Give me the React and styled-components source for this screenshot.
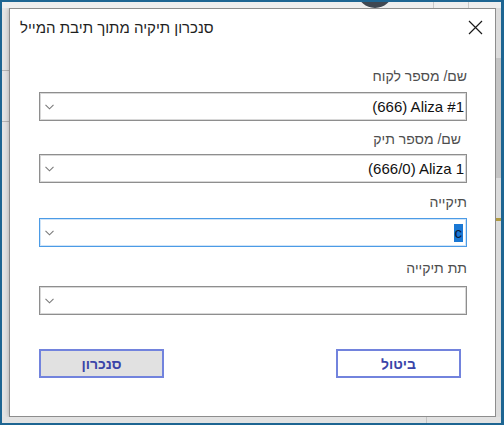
import React from 'react'
import styled, {createGlobalStyle} from 'styled-components'

const Global = createGlobalStyle`
  html, body { margin: 0; padding: 0; background: #ffffff; }
  body { font-family: "Liberation Sans", "DejaVu Sans", sans-serif; }
  * { box-sizing: border-box; }
`

const Frame = styled.div`
  width: 504px;
  height: 425px;
  border: 2px solid #1d6592;
  border-right-width: 3px;
  background: #e9e9e9;
  display: flex;
  flex-direction: column;
  overflow: hidden;
`

const TopStrip = styled.div`
  height: 6px;
  display: flex;
  background: #eeeeee;
  position: relative;
  .avatar {
    position: absolute;
    left: 356px;
    top: -24px;
    width: 34px;
    height: 30px;
    border-radius: 50%;
    background: #3f4852;
  }
  .sep {
    position: absolute;
    top: 0;
    bottom: 0;
    width: 1px;
    background: #c8c8c8;
  }
`

const Middle = styled.div`
  flex: 1;
  display: flex;
  min-height: 0;
`

const LeftStrip = styled.div`
  width: 7px;
  background: #e4e4e4;
  display: flex;
  flex-direction: column;
  .line { height: 1px; background: #b5b5b5; }
`

const RightStrip = styled.div`
  width: 5px;
  background: #dcdcdc;
  display: flex;
  flex-direction: column;
  .thumb { margin-top: 50px; height: 120px; background: #c4c4c4; }
  .mark { margin-top: 40px; height: 3px; background: #b09a40; }
`

const BottomStrip = styled.div`
  height: 6px;
  background: #e2e2e2;
  display: flex;
  .sep { margin-left: 424px; width: 1px; background: #c4c4c4; }
`

const Dialog = styled.div`
  width: 487px;
  background: #ffffff;
  border: 1px solid #8d8d8d;
  box-shadow: 0 0 5px rgba(0, 0, 0, 0.28);
  display: flex;
  flex-direction: column;
`

const TitleBar = styled.div`
  height: 36px;
  display: flex;
  align-items: center;
  justify-content: space-between;
  padding: 0 12px 0 10px;
`

const Title = styled.div`
  font-size: 15px;
  color: #1e1e1e;
  direction: rtl;
`

const Close = styled.button`
  width: 16px;
  height: 16px;
  border: none;
  background: none;
  padding: 0;
  display: flex;
  align-items: center;
  justify-content: center;
`

const Form = styled.div`
  direction: rtl;
  display: flex;
  flex-direction: column;
  padding: 22px 28px 0 29px;
`

const Label = styled.div`
  height: 18px;
  line-height: 18px;
  font-size: 14px;
  color: #4e4e4e;
  margin-top: ${p => p.$top || 0}px;
  margin-bottom: ${p => p.$bottom || 7}px;
  padding-right: ${p => p.$indent || 0}px;
`

const Select = styled.div`
  height: 29px;
  border: 1px solid ${p => (p.$focused ? '#4b9be6' : '#8e8e8e')};
  box-shadow: ${p => (p.$focused ? 'inset 0 0 0 1px #cfe4f8' : 'inset 0 0 0 1px #d8d8d8')};
  display: flex;
  align-items: center;
  justify-content: space-between;
  padding: 0 2px 0 5px;
  font-size: 15px;
  color: #111111;
`

const Value = styled.span`
  direction: ltr;
  unicode-bidi: isolate;
`

const Highlight = styled.span`
  display: inline-block;
  background: #1a78d4;
  color: #0c1a38;
  height: 18px;
  line-height: 18px;
  padding: 0 1px;
  margin-right: 1px;
`

const Buttons = styled.div`
  direction: rtl;
  display: flex;
  justify-content: space-between;
  padding: 0 6px 0 0;
  margin-top: 34px;
`

const Button = styled.button`
  width: 125px;
  height: 29px;
  border: 2px solid #7283dd;
  background: ${p => (p.$gray ? '#e1e1e1' : '#ffffff')};
  color: #3a44a8;
  font-family: "Liberation Sans", "DejaVu Sans", sans-serif;
  font-weight: bold;
  font-size: 14px;
  padding: 0;
`

const Chevron = () => (
  <svg width="9" height="6" viewBox="0 0 9 6">
    <polyline points="0.5,0.8 4.5,4.8 8.5,0.8" fill="none" stroke="#7a7a7a" strokeWidth="1.1" />
  </svg>
)

const CloseIcon = () => (
  <svg width="15" height="15" viewBox="0 0 15 15">
    <path d="M1 1 L14 14 M14 1 L1 14" stroke="#1a1a1a" strokeWidth="1.2" fill="none" />
  </svg>
)

const fields = [
  {label: 'שם/ מספר לקוח', value: '(666) Aliza #1', top: 0, bottom: 7},
  {label: 'שם/ מספר תיק', value: '(666/0) Aliza 1', top: 9, bottom: 6, indent: 6},
  {label: 'תיקייה', focused: true, top: 10, bottom: 7},
  {label: 'תת תיקייה', top: 12, bottom: 9},
]

export default function App() {
  return (
    <>
      <Global />
      <Frame>
        <TopStrip>
          <div className="avatar" />
          <div className="sep" style={{left: 431}} />
          <div className="sep" style={{left: 466}} />
        </TopStrip>
        <Middle>
          <LeftStrip>
            <div style={{height: 62}} />
            <div className="line" />
            <div style={{height: 50}} />
            <div className="line" />
          </LeftStrip>
          <Dialog>
            <TitleBar>
              <Title>סנכרון תיקיה מתוך תיבת המייל</Title>
              <Close><CloseIcon /></Close>
            </TitleBar>
            <Form>
              {fields.map(f => (
                <React.Fragment key={f.label}>
                  <Label $top={f.top} $bottom={f.bottom} $indent={f.indent}>{f.label}</Label>
                  <Select $focused={f.focused}>
                    {f.value ? <Value>{f.value}</Value> : f.focused ? <Highlight>c</Highlight> : <span />}
                    <Chevron />
                  </Select>
                </React.Fragment>
              ))}
              <Buttons>
                <Button>ביטול</Button>
                <Button $gray>סנכרון</Button>
              </Buttons>
            </Form>
          </Dialog>
          <RightStrip>
            <div className="thumb" />
            <div className="mark" />
          </RightStrip>
        </Middle>
        <BottomStrip>
          <div className="sep" />
        </BottomStrip>
      </Frame>
    </>
  )
}
